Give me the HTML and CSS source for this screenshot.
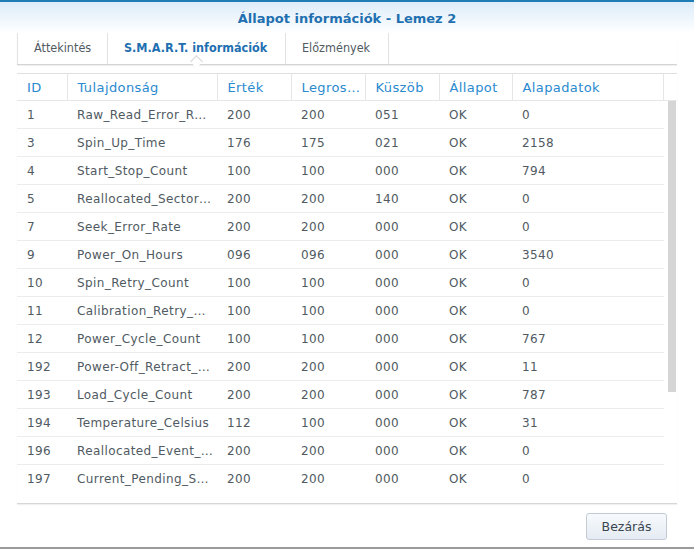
FILE: index.html
```html
<!DOCTYPE html>
<html lang="hu">
<head>
    <meta charset="UTF-8">
    <title>Állapot információk - Lemez 2</title>
    <link rel="stylesheet" href="styles.css">
</head>
<body>

<div class="dialog">
    <!-- Title bar -->
    <div class="titlebar">Állapot információk - Lemez 2</div>

    <!-- Tabs -->
    <div class="tabs">
        <div class="tab">Áttekintés</div>
        <div class="tab active">S.M.A.R.T. információk</div>
        <div class="tab">Előzmények</div>
    </div>

    <!-- SMART grid -->
    <div class="grid">
        <table class="grid-head">
            <colgroup>
                <col class="c-id"><col class="c-name"><col class="c-val"><col class="c-val">
                <col class="c-val"><col class="c-state"><col class="c-raw"><col>
            </colgroup>
            <tr>
                <th>ID</th>
                <th>Tulajdonság</th>
                <th>Érték</th>
                <th>Legrosszabb</th>
                <th>Küszöb</th>
                <th>Állapot</th>
                <th>Alapadatok</th>
                <th></th>
            </tr>
        </table>

        <div class="grid-body">
            <table class="grid-rows">
                <colgroup>
                    <col class="c-id"><col class="c-name"><col class="c-val"><col class="c-val">
                    <col class="c-val"><col class="c-state"><col>
                </colgroup>
                <tbody id="rows"></tbody>
            </table>
            <div class="scrollbar"></div>
        </div>
    </div>

    <div class="footer">
        <button class="btn">Bezárás</button>
    </div>
</div>

<script>
    const smart = [
        ["1", "Raw_Read_Error_Rate", "200", "200", "051", "OK", "0"],
        ["3", "Spin_Up_Time", "176", "175", "021", "OK", "2158"],
        ["4", "Start_Stop_Count", "100", "100", "000", "OK", "794"],
        ["5", "Reallocated_Sector_Ct", "200", "200", "140", "OK", "0"],
        ["7", "Seek_Error_Rate", "200", "200", "000", "OK", "0"],
        ["9", "Power_On_Hours", "096", "096", "000", "OK", "3540"],
        ["10", "Spin_Retry_Count", "100", "100", "000", "OK", "0"],
        ["11", "Calibration_Retry_Count", "100", "100", "000", "OK", "0"],
        ["12", "Power_Cycle_Count", "100", "100", "000", "OK", "767"],
        ["192", "Power-Off_Retract_Count", "200", "200", "000", "OK", "11"],
        ["193", "Load_Cycle_Count", "200", "200", "000", "OK", "787"],
        ["194", "Temperature_Celsius", "112", "100", "000", "OK", "31"],
        ["196", "Reallocated_Event_Count", "200", "200", "000", "OK", "0"],
        ["197", "Current_Pending_Sector", "200", "200", "000", "OK", "0"]
    ];

    const tbody = document.getElementById('rows');
    smart.forEach(row => {
        const tr = document.createElement('tr');
        row.forEach(val => {
            const td = document.createElement('td');
            td.textContent = val;
            tr.appendChild(td);
        });
        tbody.appendChild(tr);
    });
</script>

</body>
</html>
```

FILE: styles.css
```css
body {
    margin: 0;
    padding: 0;
    background: #ffffff;
    font-family: 'DejaVu Sans', sans-serif;
}

.dialog {
    height: 549px;
    box-sizing: border-box;
    border-top: 2px solid #1f7db5;
    border-bottom: 2px solid #9a9a9a;
    display: flex;
    flex-direction: column;
}

.titlebar {
    height: 31px;
    line-height: 33px;
    text-align: center;
    font-size: 13px;
    font-weight: bold;
    color: #1f70b0;
    background: linear-gradient(#dcecf9, #ffffff);
}

.tabs {
    position: relative;
    display: flex;
    margin: 0 17px;
    height: 31px;
    border-bottom: 1px solid #d4d4d4;
    box-shadow: 0 1px 1px rgba(0, 0, 0, 0.06);
}

.tab {
    font-family: 'DejaVu Sans Condensed', 'DejaVu Sans', sans-serif;
    font-size: 12.5px;
    color: #505a62;
    padding: 0 16px;
    line-height: 30px;
    border-right: 1px solid #e2e2e2;
    white-space: nowrap;
}

.tab:first-child {
    border-left: 1px solid #e2e2e2;
}

.tab.active {
    position: relative;
    color: #1f70b0;
    font-weight: bold;
}

/* little notch under the active tab */
.tab.active::after {
    content: "";
    position: absolute;
    left: 50%;
    bottom: -2px;
    width: 8px;
    height: 8px;
    margin-left: -5px;
    background: #ffffff;
    border-left: 1px solid #d4d4d4;
    border-top: 1px solid #d4d4d4;
    transform: rotate(45deg);
}

.tab:nth-child(1) { width: 57px; }
.tab:nth-child(2) { width: 145px; }
.tab:nth-child(3) { width: 70px; }

.grid {
    margin: 8px 17px 0;
    border-top: 1px solid #e0e0e0;
    border-bottom: 1px solid #d6d6d6;
    box-shadow: 0 1px 1px rgba(0, 0, 0, 0.06);
}

table {
    border-collapse: collapse;
    table-layout: fixed;
}

.c-id { width: 50px; }
.c-name { width: 150px; }
.c-val { width: 74px; }
.c-state { width: 73px; }
.c-raw { width: 151px; }

.grid-head {
    width: 660px;
}

.grid-head th {
    height: 25px;
    padding: 1px 1px 0 10px;
    text-align: left;
    font-weight: normal;
    font-size: 13px;
    letter-spacing: 0.4px;
    color: #2a8ad0;
    border-right: 1px solid #e6e6e6;
    border-bottom: 1px solid #e6e6e6;
    white-space: nowrap;
    overflow: hidden;
    text-overflow: ellipsis;
}

.grid-head th:last-child {
    border-right: none;
}

.grid-body {
    position: relative;
    height: 402px;
    overflow: hidden;
}

.grid-rows {
    width: 647px;
}

.grid-rows td {
    height: 26px;
    padding: 1px 4px 0 10px;
    font-size: 12px;
    letter-spacing: 0.4px;
    color: #505a62;
    border-bottom: 1px solid #ececec;
    white-space: nowrap;
    overflow: hidden;
    text-overflow: ellipsis;
}

.grid-rows tr:last-child td {
    border-bottom: none;
}

.scrollbar {
    position: absolute;
    top: 0;
    right: 1px;
    width: 8px;
    height: 291px;
    background: #d5d5d5;
}

.footer {
    flex: 1;
    display: flex;
    justify-content: flex-end;
    align-items: flex-start;
    padding: 9px 27px 0 0;
}

.btn {
    width: 81px;
    height: 27px;
    font-family: inherit;
    font-size: 12.5px;
    color: #3a4650;
    background: linear-gradient(#f7fafd, #e4ebf2);
    border: 1px solid #c3ccd5;
    border-radius: 3px;
    cursor: pointer;
}
```
